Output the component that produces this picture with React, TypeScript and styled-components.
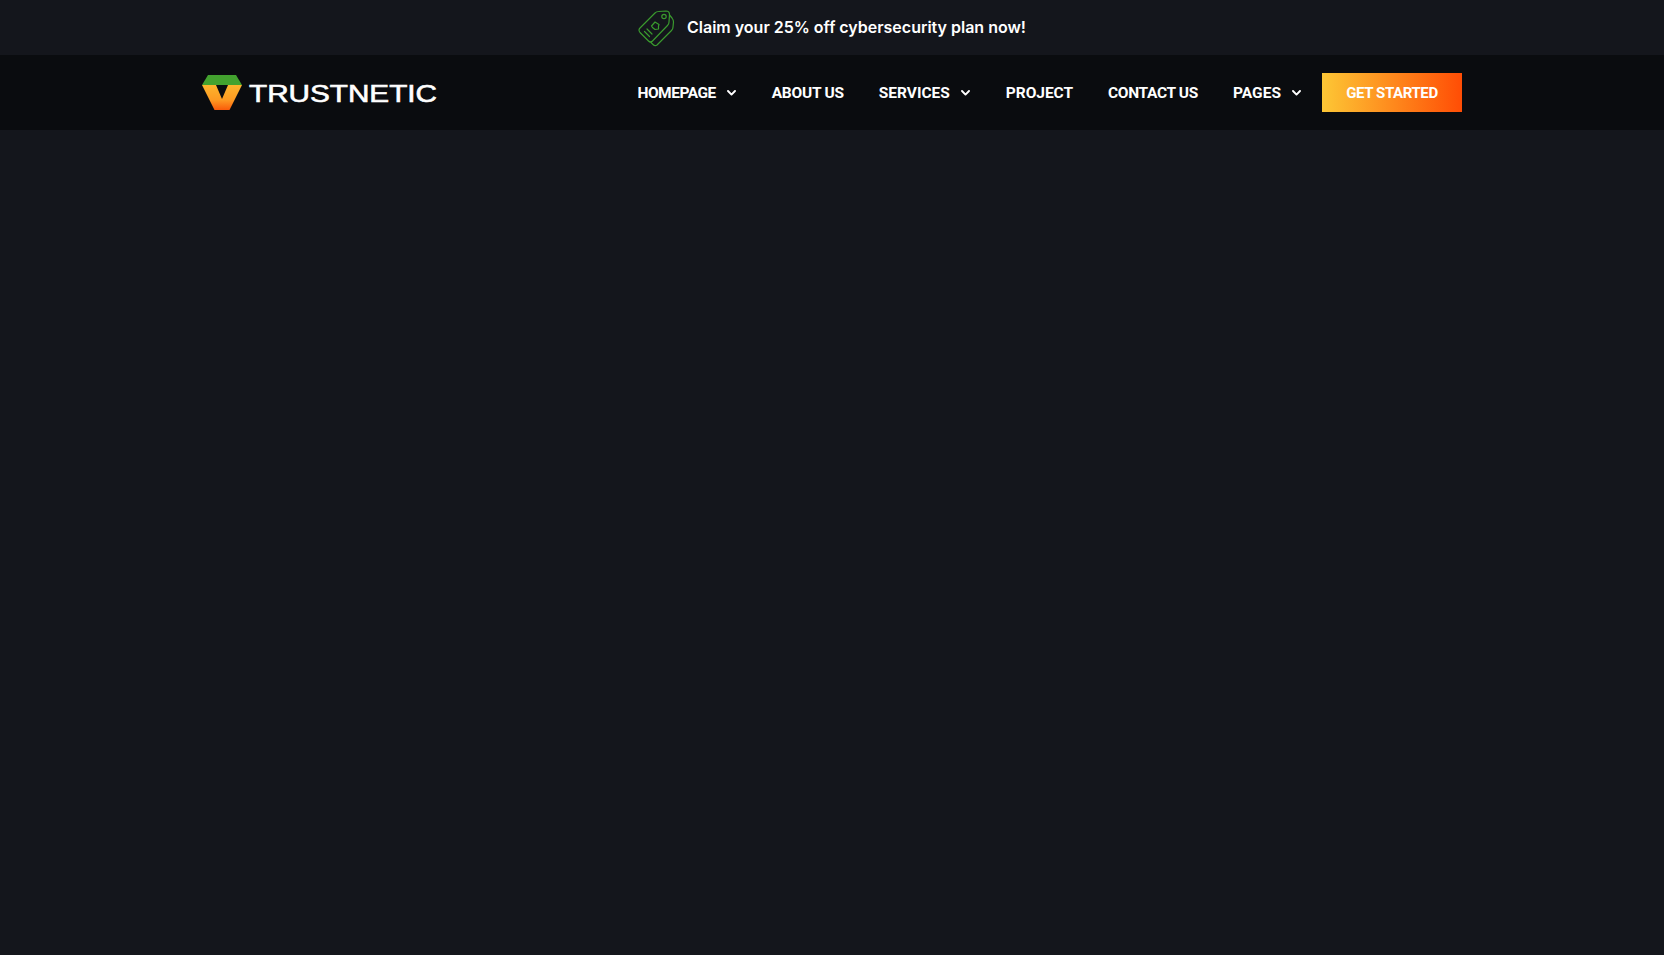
import React from 'react';
import styled, { createGlobalStyle } from 'styled-components';

const Global = createGlobalStyle`
  html, body { margin: 0; padding: 0; background: #14161c; }
  #root { min-height: 955px; }
`;
const Page = styled.div`
  min-height: 955px;
  background: #14161c;
  display: flex;
  flex-direction: column;
`;
const Promo = styled.div`
  height: 55px;
  display: flex;
  align-items: center;
  justify-content: center;
  gap: 11px;
`;
const PromoText = styled.span`
  font: 600 16px/1 Inter, sans-serif;
  letter-spacing: -0.01px;
  color: #fff;
  margin-bottom: 2px;
`;
const Bar = styled.header`
  height: 75px;
  background: #0a0c0f;
  display: flex;
  align-items: center;
  padding: 0 202px;
  justify-content: space-between;
`;
const Nav = styled.nav`
  display: flex;
  align-items: center;
  gap: 35px;
`;
const NavItem = styled.a<{ $track: number }>`
  display: flex;
  align-items: center;
  gap: 11px;
  padding-top: 2px;
  font: 700 15.5px/1 Roboto, sans-serif;
  letter-spacing: ${(p) => p.$track}px;
  color: #fff;
`;
const Chevron = styled.svg`
  display: block;
  width: 9px;
  height: 6px;
  margin: -2px 1px 0 0;
  fill: none;
  stroke: #fff;
  stroke-width: 1.9;
  stroke-linecap: round;
  stroke-linejoin: round;
`;
const Cta = styled.a`
  width: 140px;
  height: 39px;
  margin-left: -15px;
  padding-top: 1px;
  box-sizing: border-box;
  display: flex;
  align-items: center;
  justify-content: center;
  background: linear-gradient(90deg, #fdc735 0%, #ff4d05 100%);
  font: 700 15px/1 Roboto, sans-serif;
  letter-spacing: -0.4px;
  color: #fff;
`;

const Tag = () => (
  <svg width="38" height="38" viewBox="0 0 38 38" fill="none" stroke="#3a9a2e" strokeWidth="1.2" strokeLinejoin="round" strokeLinecap="round">
    <path d="M2 19 L17 4 Q18.5 2.5 20.5 2.5 L28 2 Q31.5 2 31.5 5.5 L31 13 Q31 15 29.5 16.5 L14.5 32 Q12.5 34 10.5 32 L2 23.5 Q0 21 2 19 Z" />
    <path d="M31.5 6 L34 9 Q35.5 11 35.5 13 L35 18 Q35 20 33.5 21.5 L19 36 Q17 37.5 15 35.5 L13 33.5" />
    <circle cx="26" cy="7.5" r="2.2" />
    <path d="M13.5 17 L17 13 L21 15.5 L20.5 17 L20.5 20 L17 20.5 L14.5 18.5 Z" />
    <path d="M9 20 L14 25 M6.5 22.5 L11.5 27.5" />
  </svg>
);

const Logo = () => (
  <svg width="236" height="36" viewBox="0 0 236 36">
    <defs>
      <linearGradient id="v" x1="0" y1="0" x2="0" y2="1">
        <stop offset="0" stopColor="#fdb52d" />
        <stop offset="0.6" stopColor="#fd9a22" />
        <stop offset="1" stopColor="#fa5a0a" />
      </linearGradient>
    </defs>
    <path d="M6 0 H34 L40 10 H0 Z" fill="#43a22f" />
    <path d="M0 10 H14 L20 24 L26 10 H40 L27.5 35 H12.5 Z" fill="url(#v)" />
    <text x="47" y="27" textLength="188" lengthAdjust="spacingAndGlyphs" fontFamily="Liberation Sans, sans-serif" fontSize="24" fill="#fff" stroke="#fff" strokeWidth="0.6">TRUSTNETIC</text>
  </svg>
);

const items: [string, boolean, number][] = [
  ['HOMEPAGE', true, -0.5], ['ABOUT US', false, -0.25], ['SERVICES', true, 0],
  ['PROJECT', false, -0.05], ['CONTACT US', false, -0.35], ['PAGES', true, 0.05],
];

export default function App() {
  return (
    <Page>
      <Global />
      <Promo>
        <Tag />
        <PromoText>Claim your 25% off cybersecurity plan now!</PromoText>
      </Promo>
      <Bar>
        <Logo />
        <Nav>
          {items.map(([t, c, track]) => (
            <NavItem key={t} $track={track}>
              {t}
              {c && (
                <Chevron viewBox="0 0 9 6">
                  <polyline points="1,1 4.5,4.6 8,1" />
                </Chevron>
              )}
            </NavItem>
          ))}
          <Cta>GET STARTED</Cta>
        </Nav>
      </Bar>
    </Page>
  );
}
